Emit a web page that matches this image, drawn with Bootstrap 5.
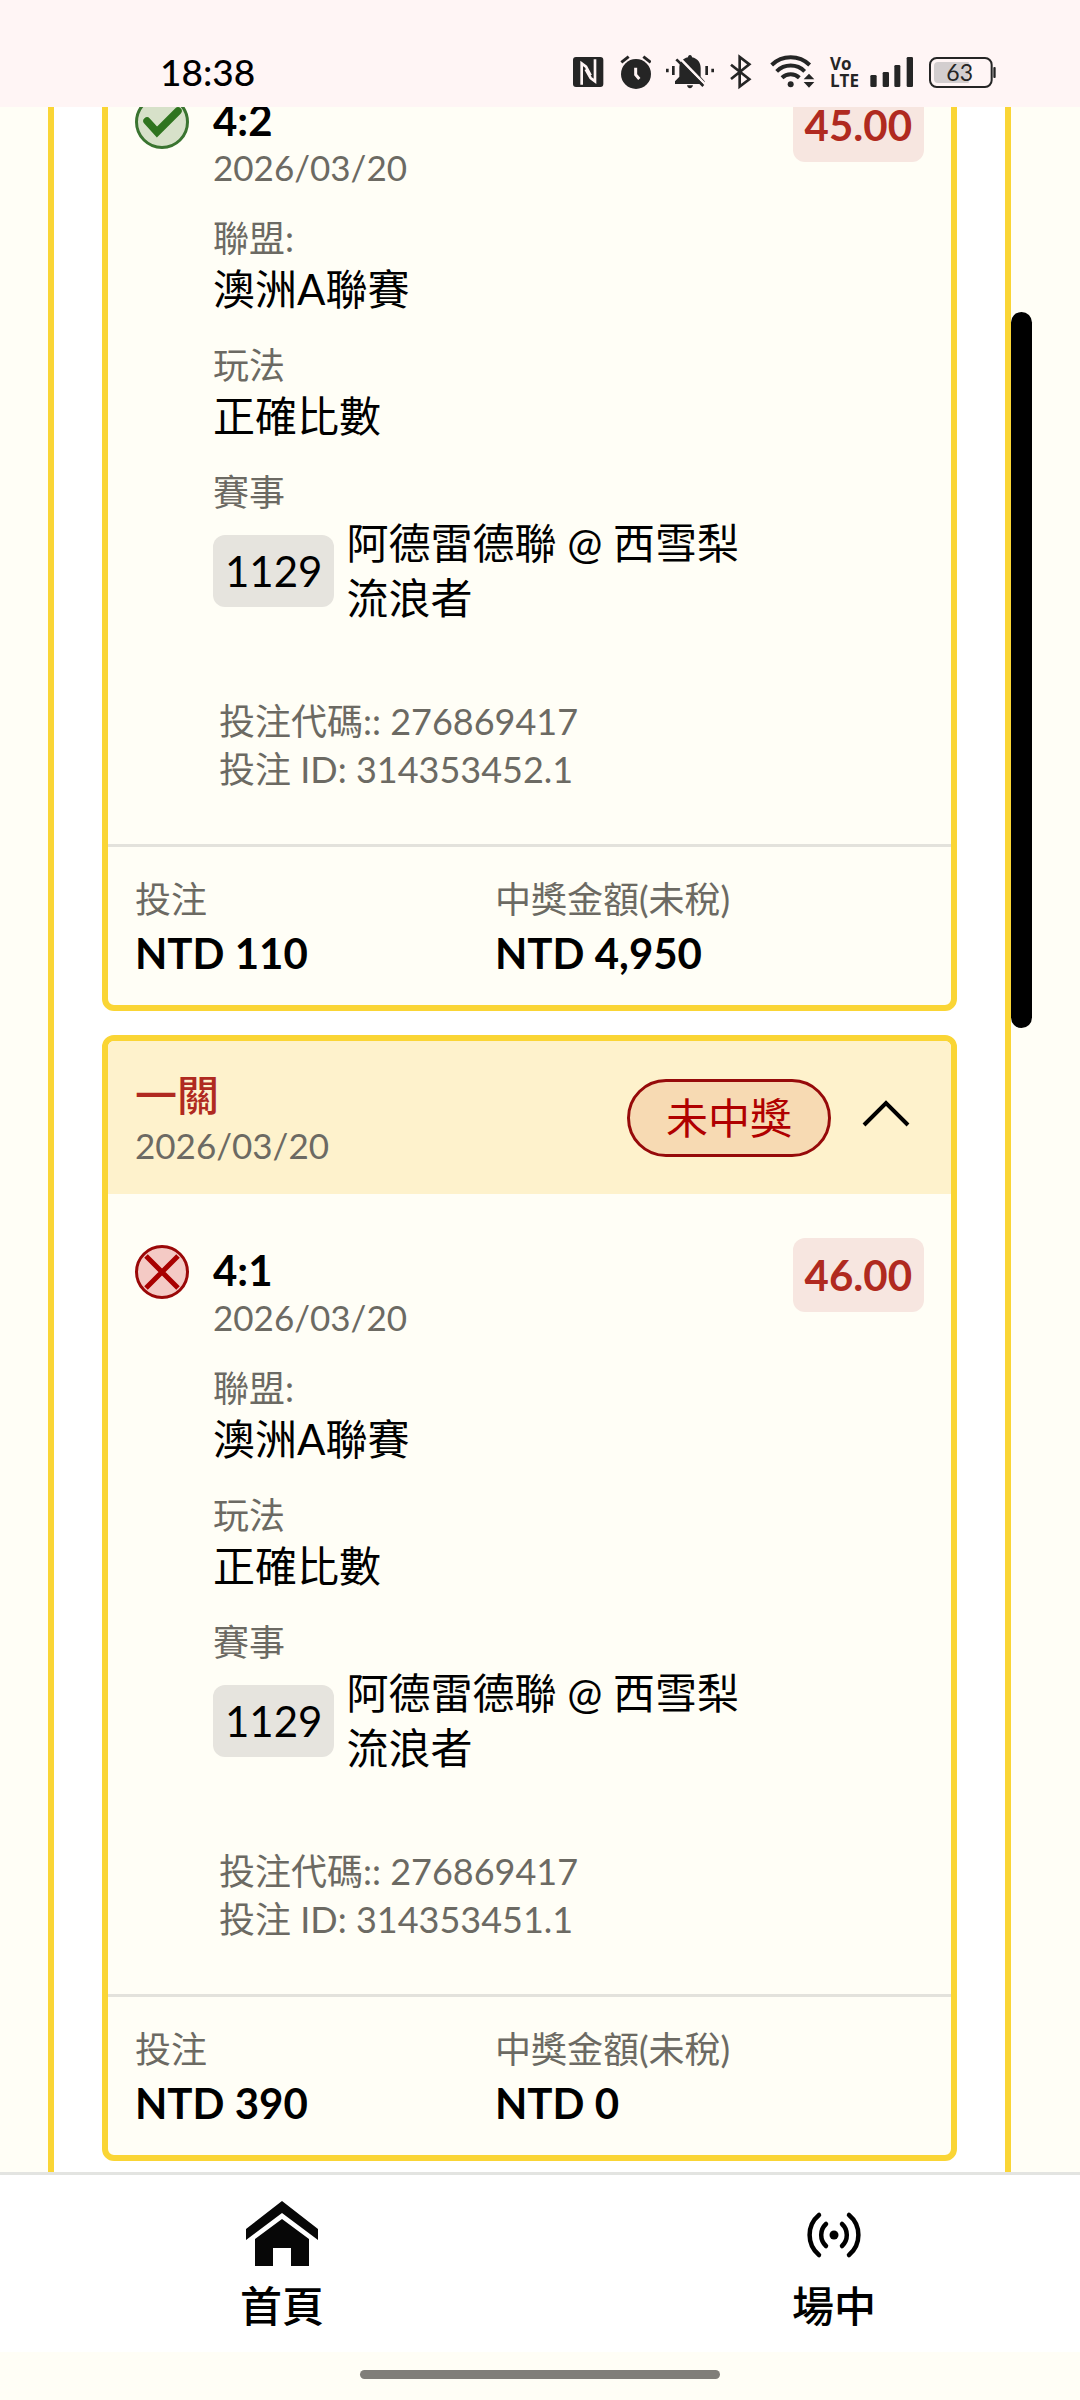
<!DOCTYPE html>
<html lang="zh-Hant">
<head>
<meta charset="utf-8">
<meta name="viewport" content="width=device-width, initial-scale=1">
<title>投注紀錄</title>
<link href="https://cdn.jsdelivr.net/npm/bootstrap@5.3.0/dist/css/bootstrap.min.css" rel="stylesheet">
<style>
  :root { --page: #fffef6; --yellow: #fad535; --muted: #6c6a63; --red: #b02a20; }
  body { font-family: Lato, "Noto Sans CJK TC", sans-serif; font-size: 42px; line-height: 55px; color: #000; background: var(--page); }
  svg { display: block; flex: none; }
  .status-bar { background: #fff5f5; padding: 54px 84px 17px 160px; line-height: 36px; }
  .clock { font-size: 37px; font-weight: 500; }
  .status-icons { gap: 15px; color: #252525; }
  .volte { width: 24px; font: 700 17px/17px "Liberation Sans Narrow", "Open Sans", sans-serif; }
  .view { padding: 0 48px; min-height: 0; }
  .history { background: #fff; border: solid var(--yellow); border-width: 0 6px; padding: 0 48px 11px; gap: 24px; min-width: 0; }
  .rail { flex: 0 0 21px; padding-top: 205px; }
  .thumb { height: 716px; border-radius: 11px; background: #000; }
  .bet { --bs-card-bg: var(--page); --bs-card-border-width: 6px; --bs-card-border-color: var(--yellow); --bs-card-border-radius: 12px; --bs-card-inner-border-radius: 6px; flex: none; overflow: hidden; color: #000; }
  .bet-head { background: #fef2cc; padding: 27px 27px 26px; gap: 21px; }
  .bet-title { line-height: 54px; font-weight: 500; color: var(--red); }
  .tag { font-size: 36px; line-height: 48px; color: var(--muted); }
  .day { font-size: 35px; line-height: 46px; }
  .result { border: 3px solid #960a0a; background: #f7dab3; color: #b00000; padding: 0 36px; line-height: 72px; border-radius: 39px; }
  .bet-body { padding: 44px 27px 51px; gap: 24px; }
  .mark-icon { margin-top: 7px; }
  .pick { margin-top: 8px; min-width: 0; }
  .score { line-height: 48px; font-weight: 700; }
  .fields { margin-top: 24px; gap: 24px; }
  .match-no { background: #e6e4de; padding: 0 12px; line-height: 72px; border-radius: 12px; }
  .match { gap: 12px; }
  .codes { margin-top: 71px; padding-left: 6px; }
  .odds { background: #f7e6e0; color: var(--red); padding: 12px; line-height: 50px; border-radius: 12px; font-weight: 700; }
  .bet-foot { border-top: 3px solid #e3e2dc; padding: 28px 27px 24px; }
  .amount { flex: 0 0 360px; }
  .amount strong { display: block; margin-top: 3px; font-weight: 700; }
  .tabs { background: #fff; border-top: 3px solid #e3e4e1; padding: 24px 0 19px 6px; overflow: hidden; flex: none; }
  .tab { flex: 0 0 552px; gap: 8px; line-height: 54px; font-weight: 500; color: #000; }
  .gesture { padding: 18px 0 21px; }
  .gesture div { width: 360px; height: 9px; border-radius: 5px; background: #807e79; }
</style>
</head>
<body class="d-flex flex-column vh-100 overflow-hidden">

<header class="status-bar d-flex align-items-center justify-content-between flex-shrink-0">
  <span class="clock">18:38</span>
  <div class="status-icons d-flex align-items-center">
    <svg width="32" height="36" viewBox="69 42 96 108" aria-label="NFC"><rect x="69" y="51" width="91" height="90" rx="9" fill="currentColor"/><path d="M95 134V70L108 80L122 106M135 58V124L122 114L107 88" fill="none" stroke="#fff5f5" stroke-width="8"/></svg>
    <svg width="31" height="36" viewBox="210 42 93 108" aria-label="鬧鐘"><circle cx="258" cy="102" r="45" fill="currentColor"/><path d="M214 67L236 50M302 67L280 50" stroke="currentColor" stroke-width="9"/><path d="M257 83V104L268 117" fill="none" stroke="#fff5f5" stroke-width="9"/></svg>
    <svg width="48" height="36" viewBox="348 42 144 108" aria-label="靜音"><path d="M420 45c4 0 6 3 6 7 17 4 26 16 26 32v26l12 14v8H375v-8l13-14V84c0-16 9-28 26-32 0-4 2-7 6-7zM411 136h18c-1 6-5 9-9 9s-8-3-9-9z" fill="currentColor"/><path d="M385 50L469 137" stroke="#fff5f5" stroke-width="8"/><path d="M379 58L460 138" stroke="currentColor" stroke-width="8"/><path d="M352 86v11M370 78v27M470 78v27M488 86v11" stroke="currentColor" stroke-width="8"/></svg>
    <svg width="24" height="36" viewBox="537 42 72 108" aria-label="藍牙"><path d="M543 74L598 118L569 140V51L598 73L543 117" fill="none" stroke="currentColor" stroke-width="8"/></svg>
    <svg width="47" height="36" viewBox="654 42 141 108" aria-label="Wi-Fi"><g fill="none" stroke="currentColor" stroke-width="12"><path d="M665 75a82 82 0 0 1 114 0"/><path d="M680 94a60 60 0 0 1 84 0"/><path d="M696 113a38 38 0 0 1 52 0"/></g><circle cx="722" cy="133" r="9" fill="currentColor"/><path d="M761 118l16-17 16 17zM761 126l16 17 16-17z" fill="currentColor"/></svg>
    <div class="volte">Vo<br>LTE</div>
    <svg width="44" height="36" viewBox="957 42 132 108" aria-label="訊號"><g fill="currentColor"><rect x="961" y="105" width="19" height="36" rx="4"/><rect x="998" y="96" width="19" height="45" rx="4"/><rect x="1033" y="75" width="18" height="66" rx="4"/><rect x="1070" y="51" width="19" height="90" rx="4"/></g></svg>
    <svg width="68" height="36" viewBox="1134 42 204 108" aria-label="電量"><rect x="1140" y="54" width="185" height="87" rx="20" fill="none" stroke="currentColor" stroke-width="6"/><path d="M1164 66h92v63h-92a12 12 0 0 1-12-12V78a12 12 0 0 1 12-12z" fill="#d3cecf"/><rect x="1330" y="81" width="7" height="33" rx="3" fill="currentColor"/><text x="1229" y="122" text-anchor="middle" font-size="69" fill="currentColor">63</text></svg>
  </div>
</header>

<main class="view d-flex flex-grow-1 overflow-hidden">
  <section class="history d-flex flex-column justify-content-end flex-grow-1">

    <article class="bet card">
      <div class="bet-body d-flex align-items-start">
        <svg class="mark-icon" width="54" height="54" viewBox="0 0 54 54" aria-label="中獎"><circle cx="27" cy="27" r="25.5" fill="#d7e1c9" stroke="#3a7430" stroke-width="3"/><path d="M12 26L22 37L43 16" fill="none" stroke="#2f741f" stroke-width="7.5" stroke-linecap="round"/></svg>
        <div class="pick flex-grow-1">
          <div class="score">4:2</div>
          <div class="tag day">2026/03/20</div>
          <div class="fields d-flex flex-column">
            <div><div class="tag">聯盟:</div><div>澳洲A聯賽</div></div>
            <div><div class="tag">玩法</div><div>正確比數</div></div>
            <div><div class="tag">賽事</div>
              <div class="match d-flex align-items-center"><span class="match-no">1129</span><span>阿德雷德聯 @ 西雪梨流浪者</span></div></div>
          </div>
          <div class="codes tag">投注代碼:: 276869417<br>投注 ID: 314353452.1</div>
        </div>
        <span class="odds">45.00</span>
      </div>
      <div class="bet-foot d-flex">
        <div class="amount"><div class="tag">投注</div><strong>NTD 110</strong></div>
        <div class="amount"><div class="tag">中獎金額(未稅)</div><strong>NTD 4,950</strong></div>
      </div>
    </article>

    <article class="bet card">
      <div class="bet-head d-flex align-items-center">
        <div class="flex-grow-1"><div class="bet-title">一關</div><div class="tag day">2026/03/20</div></div>
        <span class="result">未中獎</span>
        <button type="button" class="btn p-0 border-0" aria-label="收合"><svg width="72" height="72" viewBox="0 0 72 72"><path d="M12 43L34 21L56 43" fill="none" stroke="#000" stroke-width="4"/></svg></button>
      </div>
      <div class="bet-body d-flex align-items-start">
        <svg class="mark-icon" width="54" height="54" viewBox="0 0 54 54" aria-label="未中獎"><circle cx="27" cy="27" r="25.5" fill="#f4cac5" stroke="#9a0808" stroke-width="3"/><path d="M11 11L43 43M43 11L11 43" stroke="#a80000" stroke-width="5"/></svg>
        <div class="pick flex-grow-1">
          <div class="score">4:1</div>
          <div class="tag day">2026/03/20</div>
          <div class="fields d-flex flex-column">
            <div><div class="tag">聯盟:</div><div>澳洲A聯賽</div></div>
            <div><div class="tag">玩法</div><div>正確比數</div></div>
            <div><div class="tag">賽事</div>
              <div class="match d-flex align-items-center"><span class="match-no">1129</span><span>阿德雷德聯 @ 西雪梨流浪者</span></div></div>
          </div>
          <div class="codes tag">投注代碼:: 276869417<br>投注 ID: 314353451.1</div>
        </div>
        <span class="odds">46.00</span>
      </div>
      <div class="bet-foot d-flex">
        <div class="amount"><div class="tag">投注</div><strong>NTD 390</strong></div>
        <div class="amount"><div class="tag">中獎金額(未稅)</div><strong>NTD 0</strong></div>
      </div>
    </article>

  </section>
  <div class="rail"><div class="thumb"></div></div>
</main>

<nav class="tabs d-flex">
  <a href="#" class="tab d-flex flex-column align-items-center text-decoration-none">
    <svg width="72" height="72" viewBox="0 0 72 72"><path d="M36 2L72 30V41L36 14L0 41V30zM36 20L63 40V67H45V49H27V67H9V40z" fill="#070707"/></svg>
    <span>首頁</span>
  </a>
  <a href="#" class="tab d-flex flex-column align-items-center text-decoration-none">
    <svg width="72" height="72" viewBox="0 0 72 72"><circle cx="36" cy="36" r="4.5"/><g fill="none" stroke="#000" stroke-width="4.5" stroke-linecap="round"><path d="M28 25A15 15 0 0 0 28 47M44 25A15 15 0 0 1 44 47M21 16A26 26 0 0 0 21 56M51 16A26 26 0 0 1 51 56"/></g></svg>
    <span>場中</span>
  </a>
</nav>
<footer class="gesture d-flex justify-content-center flex-shrink-0"><div></div></footer>

<script src="https://cdn.jsdelivr.net/npm/bootstrap@5.3.0/dist/js/bootstrap.bundle.min.js"></script>
</body>
</html>
